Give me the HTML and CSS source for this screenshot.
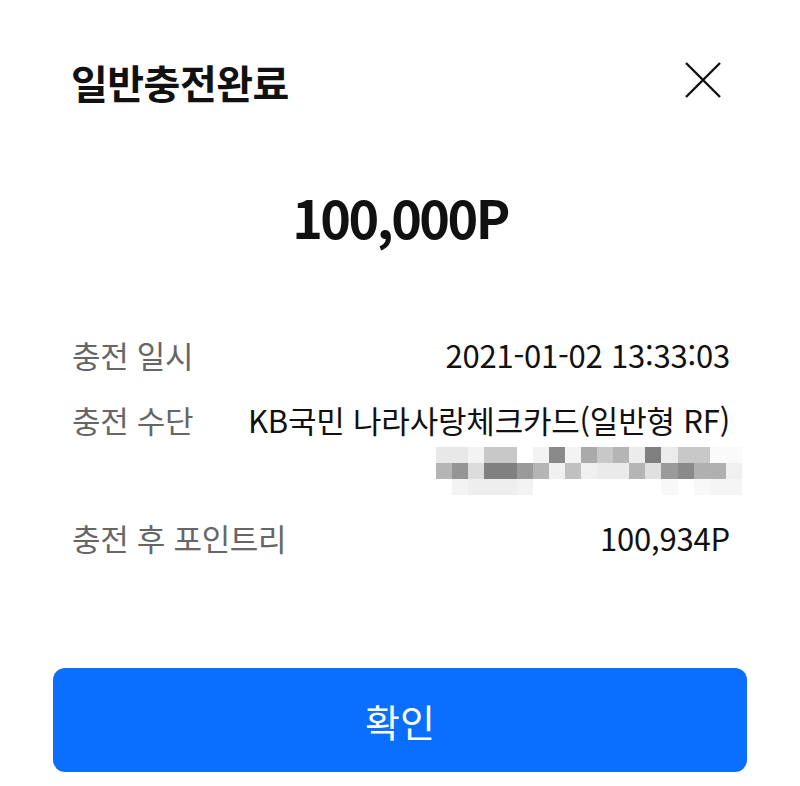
FILE: index.html
```html
<!DOCTYPE html>
<html lang="ko">
<head>
<meta charset="utf-8">
<link rel="stylesheet" href="styles.css">
</head>
<body>
<div class="sheet">
  <header class="head">
    <h1 class="title">일반충전완료</h1>
    <button class="close" aria-label="닫기">
      <svg width="38" height="38" viewBox="0 0 38 38"><path d="M2 2 L36 36 M36 2 L2 36" stroke="#111" stroke-width="2.4" fill="none"/></svg>
    </button>
  </header>
  <div class="amount">100,000P</div>
  <div class="rows">
    <div class="row">
      <span class="label">충전 일시</span>
      <span class="value">2021-01-02 13:33:03</span>
    </div>
    <div class="row card">
      <span class="label">충전 수단</span>
      <div class="value-col">
        <span class="value">KB국민 나라사랑체크카드(일반형 RF)</span>
        <div class="mosaic">
          <i style="background:#e8e8e8"></i><i style="background:#e8e8e8"></i><i style="background:#f3f3f3"></i><i style="background:#c8c8c8"></i><i style="background:#c8c8c8"></i><i style="background:#fff"></i><i style="background:#f3f3f3"></i><i style="background:#8a8a8a"></i><i style="background:#f3f3f3"></i><i style="background:#aaa"></i><i style="background:#c8c8c8"></i><i style="background:#b5b5b5"></i><i style="background:#ececec"></i><i style="background:#808080"></i><i style="background:#ececec"></i><i style="background:#c8c8c8"></i><i style="background:#c8c8c8"></i><i style="background:#fafafa"></i><i style="background:#fafafa"></i>
          <i style="background:#b5b5b5"></i><i style="background:#959595"></i><i style="background:#dcdcdc"></i><i style="background:#808080"></i><i style="background:#808080"></i><i style="background:#9a9a9a"></i><i style="background:#b5b5b5"></i><i style="background:#f0f0f0"></i><i style="background:#c0c0c0"></i><i style="background:#f0f0f0"></i><i style="background:#eaeaea"></i><i style="background:#eaeaea"></i><i style="background:#b5b5b5"></i><i style="background:#e0e0e0"></i><i style="background:#9a9a9a"></i><i style="background:#8a8a8a"></i><i style="background:#b0b0b0"></i><i style="background:#b0b0b0"></i><i style="background:#f0f0f0"></i>
          <i style="background:#fff"></i><i style="background:#f3f3f3"></i><i style="background:#eee"></i><i style="background:#eee"></i><i style="background:#eee"></i><i style="background:#f3f3f3"></i><i style="background:#fff"></i><i style="background:#fff"></i><i style="background:#fff"></i><i style="background:#fff"></i><i style="background:#fff"></i><i style="background:#fff"></i><i style="background:#fff"></i><i style="background:#fff"></i><i style="background:#f8f8f8"></i><i style="background:#fff"></i><i style="background:#f8f8f8"></i><i style="background:#f5f5f5"></i><i style="background:#f5f5f5"></i>
        </div>
      </div>
    </div>
    <div class="row">
      <span class="label">충전 후 포인트리</span>
      <span class="value">100,934P</span>
    </div>
  </div>
  <div class="footer">
    <button class="confirm">확인</button>
  </div>
</div>
</body>
</html>
```

FILE: styles.css
```css
* { box-sizing: border-box; }
html, body { margin: 0; padding: 0; background: #fff; }
body {
  font-family: "Noto Sans CJK KR", "Noto Sans", sans-serif;
  color: #111;
  width: 800px;
  height: 786px;
  overflow: hidden;
}
.sheet {
  display: flex;
  flex-direction: column;
  height: 786px;
}
.head {
  display: flex;
  justify-content: space-between;
  align-items: center;
  padding: 52px 78px 0 71px;
  height: 112px;
}
.title {
  margin: 0;
  font-size: 40px;
  font-weight: 700;
  letter-spacing: -0.5px;
  line-height: 56px;
}
.close {
  border: 0;
  background: none;
  padding: 0;
  width: 38px;
  height: 38px;
  display: flex;
  margin-top: -4px;
}
.amount {
  text-align: center;
  font-size: 52px;
  font-weight: 700;
  letter-spacing: -2.5px;
  margin-top: 70px;
  line-height: 70px;
}
.rows {
  display: flex;
  flex-direction: column;
  padding: 0 70px 0 72px;
  margin-top: 81px;
  gap: 21px;
}
.row {
  display: flex;
  justify-content: space-between;
  align-items: flex-start;
  font-size: 31px;
  line-height: 44px;
}
.label { color: #666; letter-spacing: -0.3px; }
.value { color: #111; letter-spacing: -0.2px; }
.value-col {
  display: flex;
  flex-direction: column;
  align-items: flex-end;
}
.mosaic {
  display: grid;
  grid-template-columns: repeat(19, 1fr);
  grid-auto-rows: 16px;
  width: 306px;
  margin-top: 5px;
  margin-right: -12px;
}
.mosaic i { display: block; }
.footer {
  margin-top: auto;
  padding: 0 53px 14px 53px;
}
.confirm {
  width: 100%;
  height: 104px;
  border: 0;
  border-radius: 12px;
  background: #0a6ffe;
  color: #fff;
  font-family: "Noto Sans CJK KR", sans-serif;
  font-size: 38px;
  font-weight: 400;
}
```
